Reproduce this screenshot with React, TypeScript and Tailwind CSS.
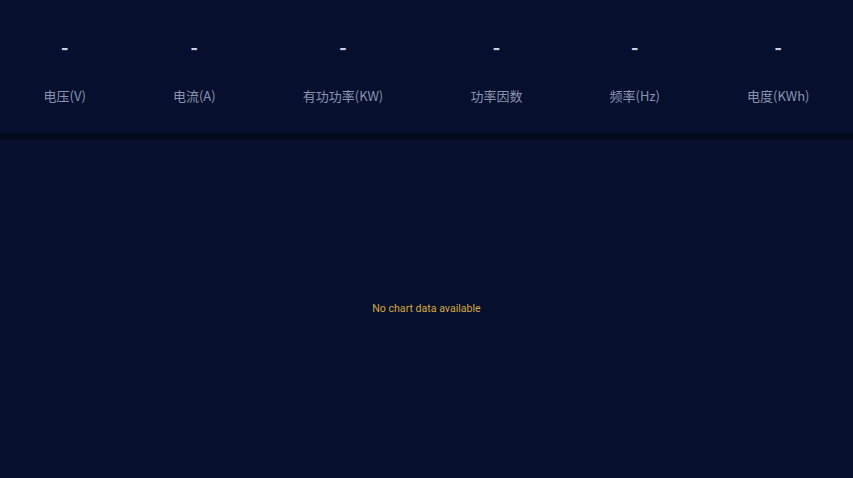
const metrics = [
  { label: '电压(V)', value: '-' },
  { label: '电流(A)', value: '-' },
  { label: '有功功率(KW)', value: '-' },
  { label: '功率因数', value: '-' },
  { label: '频率(Hz)', value: '-' },
  { label: '电度(KWh)', value: '-' },
]

export default function App() {
  return (
    <div className="w-[853px] h-[478px] bg-[#060f2e] flex flex-col font-['Noto_Sans_CJK_SC',sans-serif] overflow-hidden">
      <div className="h-[133px] flex justify-around pt-[33px]">
        {metrics.map((m) => (
          <div key={m.label} className="flex flex-col items-center">
            <span className="text-[20px] leading-[28px] font-semibold text-[#c9d1ea]">{m.value}</span>
            <span className="mt-[26px] text-[13px] leading-[18px] text-[#8b93ae]">{m.label}</span>
          </div>
        ))}
      </div>
      <div className="h-[7px] bg-[#020a1d]" />
      <div className="flex-1 flex items-center justify-center">
        <p className="font-['Roboto',sans-serif] text-[10.6px] text-[#d7aa3c]">No chart data available</p>
      </div>
    </div>
  )
}
